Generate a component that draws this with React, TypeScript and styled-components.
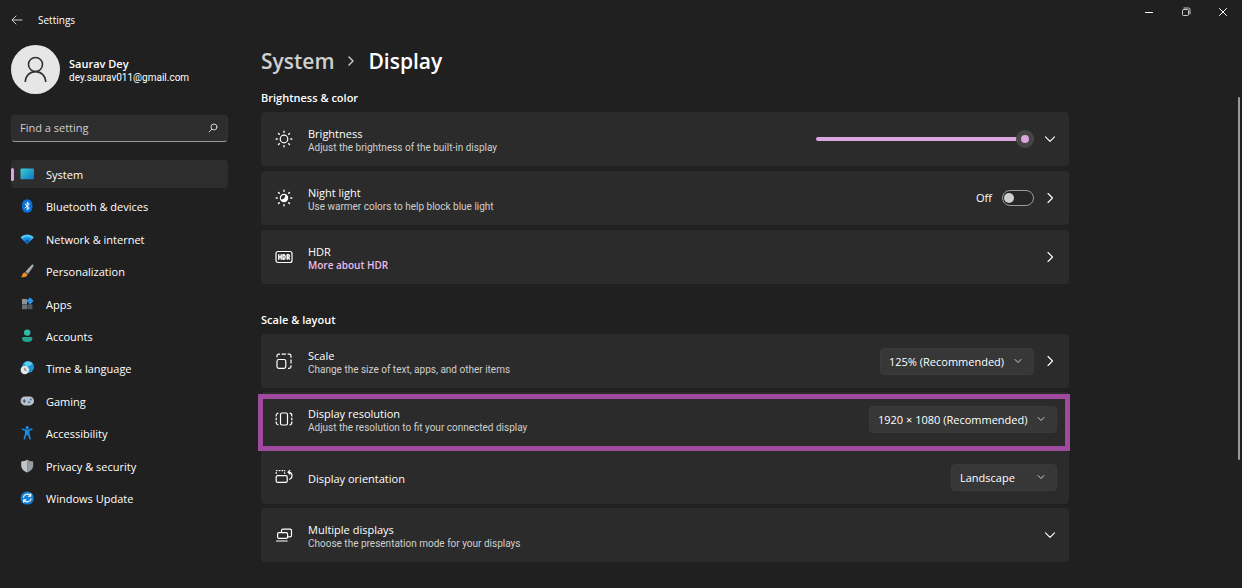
import React from "react";
import styled, { createGlobalStyle, css } from "styled-components";

const GlobalStyle = createGlobalStyle`
  * { box-sizing: border-box; }
  body {
    margin: 0;
    background: #202020;
    color: #fff;
    font-family: "Open Sans", "Noto Sans", sans-serif;
    font-size: 11px;
    line-height: 14px;
  }
  button, input, select { font: inherit; color: inherit; }
`;

const Window = styled.div`
  display: flex;
  flex-direction: column;
  min-height: 100vh;
`;

const TitleBar = styled.header`
  display: flex;
  align-items: center;
  height: 40px;
`;

const IconButton = styled.button`
  display: grid;
  place-items: center;
  flex: none;
  padding: 0;
  border: 0;
  background: none;
`;

const BackButton = styled(IconButton)`
  width: 34px;
  height: 28px;
`;

const AppName = styled.span`
  flex: 1;
  padding-left: 4px;
  font-size: 10px;
`;

const Caption = styled.div`
  display: flex;
  align-self: flex-start;
`;

const CaptionButton = styled(IconButton)`
  width: 37px;
  height: 24px;
`;

const Body = styled.div`
  display: flex;
  flex: 1;
`;

const Sidebar = styled.aside`
  flex: none;
  width: 228px;
  padding: 5px 0 0 11px;
`;

const Profile = styled.div`
  display: flex;
  align-items: center;
  gap: 9px;
`;

const ProfileText = styled.div`
  padding-top: 2px;
`;

const Avatar = styled.svg`
  flex: none;
  width: 49px;
  height: 49px;
`;

const UserName = styled.div`
  font-weight: 600;
`;

const UserMail = styled.div`
  font-family: Roboto, "Open Sans", sans-serif;
  font-size: 10px;
  line-height: 13px;
`;

const Search = styled.label`
  display: flex;
  align-items: center;
  height: 27px;
  margin-top: 21px;
  padding: 0 9px 1px 8px;
  border: 1px solid #303030;
  border-bottom-color: #9a9a9a;
  border-radius: 4px;
  background: #2d2d2d;
`;

const SearchInput = styled.input`
  flex: 1;
  min-width: 0;
  padding: 0;
  border: 0;
  outline: 0;
  background: none;
  &::placeholder { color: #cfcfcf; opacity: 1; }
`;

const Nav = styled.nav`
  display: flex;
  flex-direction: column;
  justify-content: space-between;
  min-height: 352px;
  margin-top: 18px;
`;

const NavLink = styled.a<{ $active?: boolean }>`
  position: relative;
  display: flex;
  align-items: center;
  gap: 11px;
  height: 28px;
  padding-left: 8px;
  border-radius: 4px;
  color: #fff;
  text-decoration: none;
  ${(p) =>
    p.$active &&
    css`
      background: #2d2d2d;
      &::before {
        content: "";
        position: absolute;
        left: 0;
        top: 8px;
        width: 3px;
        height: 13px;
        border-radius: 2px;
        background: #dba5e0;
      }
    `}
`;

const NavLabel = styled.span`
  padding-top: 2px;
`;

const Main = styled.main`
  flex: 1;
  min-width: 0;
  padding: 6px 20px 26px 33px;
`;

const Column = styled.div`
  max-width: 808px;
`;

const Breadcrumb = styled.h1`
  display: flex;
  align-items: center;
  gap: 13px;
  margin: 0;
  font-size: 21px;
  line-height: 30px;
  font-weight: 600;
`;

const Crumb = styled.a`
  color: #cfcfcf;
  text-decoration: none;
`;

const Section = styled.section<{ $top: number }>`
  margin-top: ${(p) => p.$top}px;
`;

const SectionTitle = styled.h2`
  margin: 0 0 6px;
  font-size: 11px;
  line-height: 16px;
  font-weight: 600;
`;

const Cards = styled.div<{ $gap: number }>`
  display: flex;
  flex-direction: column;
  gap: ${(p) => p.$gap}px;
`;

const Card = styled.div<{ $framed?: boolean }>`
  position: relative;
  display: flex;
  align-items: center;
  gap: 9px;
  min-height: 54px;
  padding: 0 12px 0 14px;
  border-radius: 4px;
  background: #2b2b2b;
  ${(p) =>
    p.$framed &&
    css`
      &::after {
        content: "";
        position: absolute;
        z-index: 1;
        inset: 2px -1px -5px -3px;
        border: 5px solid #a04a9f;
        pointer-events: none;
      }
    `}
`;

const CardText = styled.div`
  flex: 1;
  min-width: 0;
  padding: 3px 0 0 6px;
`;

const CardTitle = styled.div``;

const CardNote = styled.div`
  color: #cfcfcf;
  font-family: Roboto, "Open Sans", sans-serif;
  font-size: 10px;
  line-height: 13px;
`;

const CardLink = styled.a`
  display: block;
  color: #e9bdec;
  font-size: 10px;
  line-height: 13px;
  font-weight: 600;
  text-decoration: none;
`;

const ChevronButton = styled(IconButton)`
  width: 14px;
  height: 24px;
`;

const Slider = styled.input`
  appearance: none;
  width: 218px;
  height: 18px;
  margin: 0;
  background: none;
  &::-webkit-slider-runnable-track {
    height: 4px;
    border-radius: 2px;
    background: #dba5e0;
  }
  &::-webkit-slider-thumb {
    appearance: none;
    width: 18px;
    height: 18px;
    margin-top: -7px;
    border: 5px solid #454545;
    border-radius: 50%;
    background: #dba5e0;
  }
`;

const ToggleLabel = styled.label`
  display: flex;
  align-items: center;
  gap: 10px;
`;

const Toggle = styled.input`
  appearance: none;
  display: flex;
  align-items: center;
  width: 32px;
  height: 16px;
  margin: 0;
  padding: 0 1px;
  border: 1px solid #9c9c9c;
  border-radius: 8px;
  background: #262626;
  &::before {
    content: "";
    width: 10px;
    height: 10px;
    border-radius: 50%;
    background: #cfcfcf;
  }
  &:checked { justify-content: flex-end; }
`;

const SelectBox = styled.span`
  position: relative;
  display: flex;
`;

const Select = styled.select`
  appearance: none;
  min-width: 106px;
  height: 27px;
  padding: 1px 28px 0 8px;
  border: 1px solid #3a3a3a;
  border-radius: 4px;
  background: #373737;
`;

const SelectArrow = styled.svg`
  position: absolute;
  right: 12px;
  top: 9px;
  pointer-events: none;
`;

const Rail = styled.div`
  flex: none;
  width: 4px;
  padding-top: 57px;
`;

const Thumb = styled.div`
  width: 2px;
  height: 74%;
  border-radius: 1px;
  background: #9a9a9a;
`;

const stroke = { fill: "none", stroke: "#fff", strokeLinecap: "round", strokeLinejoin: "round" } as const;
const softStroke = { ...stroke, stroke: "#cfcfcf" } as const;

const Chevron = ({ dir }: { dir: "down" | "right" }) => (
  <svg width="12" height="12" viewBox="0 0 12 12" {...stroke} strokeWidth="1.1">
    <path d={dir === "down" ? "M1.5 3.8 6 8.3 10.5 3.8" : "M4 1.5 8.5 6 4 10.5"} />
  </svg>
);

const Dropdown = ({ label, options }: { label: string; options: string[] }) => (
  <SelectBox>
    <Select aria-label={label} defaultValue={options[0]}>
      {options.map((o) => (
        <option key={o}>{o}</option>
      ))}
    </Select>
    <SelectArrow width="8" height="8" viewBox="0 0 8 8" {...softStroke}>
      <path d="M1 2.5 4 5.5 7 2.5" />
    </SelectArrow>
  </SelectBox>
);

const Glyph = ({ cap = "round", children }: { cap?: "round" | "butt"; children: React.ReactNode }) => (
  <svg width="18" height="18" viewBox="0 0 18 18" {...stroke} strokeLinecap={cap} strokeWidth="1.2">
    {children}
  </svg>
);

const rays = "M9 1.2v1M9 15.8v1M1.2 9h1M15.8 9h1M3.5 3.5l.8.8M13.7 13.7l.8.8M3.5 14.5l.8-.8M13.7 4.3l.8-.8";

const glyphs = {
  sun: (
    <Glyph>
      <circle cx="9" cy="9" r="3.8" />
      <path d={rays} strokeWidth="1.4" />
    </Glyph>
  ),
  night: (
    <Glyph>
      <circle cx="9" cy="9" r="3.6" />
      <path d="M12 6.2A4 4 0 1 1 5.4 10.6C8.6 10.8 10.6 8.6 10.2 5.4Z" fill="#fff" stroke="none" />
      <path d={rays} strokeWidth="1.4" />
    </Glyph>
  ),
  hdr: (
    <Glyph>
      <rect x="1" y="3.5" width="16" height="11" rx="2" />
      <path d="M3.8 6.8v4.4M6.2 6.8v4.4M3.8 9h2.4M8 6.8v4.4h.6c2 0 2-4.4 0-4.4ZM12.2 11.2V6.8h1.1c1.5 0 1.5 2.4 0 2.4h-1.1M13.2 9.2l1.1 2" strokeWidth="1.4" />
    </Glyph>
  ),
  scale: (
    <Glyph cap="butt">
      <rect x="2" y="7.5" width="8.8" height="8.8" rx="1.8" />
      <path d="M2 5.2V4a1.8 1.8 0 0 1 1.8-1.8H5M6.6 2.2h4.4M12.6 2.2h1.6A1.8 1.8 0 0 1 16 4v1.8M16 7.6v4M16 13.2v1.3a1.8 1.8 0 0 1-1.8 1.8H13" />
    </Glyph>
  ),
  resolution: (
    <Glyph cap="butt">
      <rect x="5.5" y="3" width="7" height="12" rx="1.4" />
      <path d="M3.4 3.2A2.2 2.2 0 0 0 1.2 5.4v1M1.2 7.8v2.400M1.2 11.600v1A2.200 2.200 0 0 0 3.400 14.800M14.600 3.200A2.200 2.200 0 0 1 16.800 5.400v1M16.800 7.800v2.400M16.800 11.600v1A2.200 2.200 0 0 1 14.600 14.800" />
    </Glyph>
  ),
  orientation: (
    <Glyph>
      <rect x="1.2" y="7.6" width="11" height="6.8" rx="1.4" />
      <path d="M1.2 5.2V4.8M1.4 2.6h.6M4.2 2.6h.7M7 2.6h.7M9.7 2.6v.1M9.7 5v.2" strokeWidth="1.4" />
      <path d="M13 4.2C15.6 4.2 17 5.8 17 7.6S15.8 10.8 14.6 11.2M14.8 2.4 13 4.2l1.8 1.8" />
    </Glyph>
  ),
  multiple: (
    <Glyph>
      <path d="M6.5 6V4.6A1.4 1.4 0 0 1 7.9 3.2h7.2a1.4 1.4 0 0 1 1.4 1.4v4.8a1.4 1.4 0 0 1-1.4 1.4H13" />
      <rect x="2.6" y="6.6" width="10" height="5.8" rx="1.4" />
      <path d="M1.4 15h10.8" />
    </Glyph>
  ),
};

const NavIcon = ({ children }: { children: React.ReactNode }) => (
  <svg width="16" height="16" viewBox="0 0 16 16">
    {children}
  </svg>
);

const navItems: { label: string; icon: React.ReactNode }[] = [
  {
    label: "System",
    icon: (
      <NavIcon>
        <defs>
          <linearGradient id="sys" x1="0" y1="0" x2="1" y2="1">
            <stop offset="0" stopColor="#3bd0d8" />
            <stop offset="1" stopColor="#1272bd" />
          </linearGradient>
        </defs>
        <rect x="1.5" y="2.5" width="13.5" height="10.8" rx="1" fill="url(#sys)" />
      </NavIcon>
    ),
  },
  {
    label: "Bluetooth & devices",
    icon: (
      <NavIcon>
        <rect x="3" y="1.3" width="10.4" height="13.4" rx="5.2" fill="#0a6fd6" />
        <path d="M5.8 5.8 10.4 10 8.2 12V4l2.2 2-4.6 4.2" fill="none" stroke="#fff" strokeWidth="1" strokeLinejoin="round" />
      </NavIcon>
    ),
  },
  {
    label: "Network & internet",
    icon: (
      <NavIcon>
        <path d="M1.6 6.4C5 2.6 11.4 2.6 14.8 6.4L8.2 13Z" fill="#4cc6f5" />
        <path d="M3.3 8C6 5.3 10.4 5.3 13 8L8.2 13Z" fill="#168fe0" />
        <path d="M5.2 10c1.8-1.6 4.2-1.6 6 0l-3 3Z" fill="#0f5cb5" />
      </NavIcon>
    ),
  },
  {
    label: "Personalization",
    icon: (
      <NavIcon>
        <path d="M13.6 1.6c1 0 1.4.8.8 1.7L9.4 10.6 6.6 8.4l5.8-6.2c.3-.4.7-.6 1.2-.6Z" fill="#a9adb2" />
        <path d="M6.6 8.4 9.4 10.6l-.9 1.2-2.9-2.3Z" fill="#6c7075" />
        <path d="M5.5 9.4 8.5 11.7C8.2 13.8 5.2 14.8 2 13.9c1.4-.6 1.2-1.4 1.5-2.6.2-1 1-1.7 2-1.9Z" fill="#f08a24" />
      </NavIcon>
    ),
  },
  {
    label: "Apps",
    icon: (
      <NavIcon>
        <rect x="3" y="3" width="5" height="5" fill="#8c9299" />
        <rect x="3" y="8.4" width="5" height="4.8" fill="#6b7178" />
        <rect x="8.4" y="8.4" width="5" height="4.8" fill="#565b61" />
        <rect x="8.6" y="2.4" width="5" height="5" rx=".6" transform="rotate(45 11.1 4.9)" fill="#2b96e6" />
      </NavIcon>
    ),
  },
  {
    label: "Accounts",
    icon: (
      <NavIcon>
        <circle cx="8.2" cy="4.6" r="3.2" fill="#2dbfa5" />
        <path d="M4.6 9H11.8C12.8 9 13.4 9.6 13.4 10.5 13.4 12.9 11.1 14 8.2 14S3 12.9 3 10.5C3 9.6 3.6 9 4.6 9Z" fill="#22a58e" />
      </NavIcon>
    ),
  },
  {
    label: "Time & language",
    icon: (
      <NavIcon>
        <circle cx="9" cy="7" r="6" fill="#1d96d3" />
        <path d="M5 3.2C7.4.6 12 1.2 13.6 3.8 12 6 8 6.8 6.4 5.6Z" fill="#5fcdf0" />
        <circle cx="5.8" cy="10" r="4.2" fill="#e4e6e8" />
        <path d="M5.8 7.8V10.2H7.6" fill="none" stroke="#666b70" strokeWidth=".9" />
      </NavIcon>
    ),
  },
  {
    label: "Gaming",
    icon: (
      <NavIcon>
        <rect x="1.6" y="3.4" width="13.4" height="9" rx="4.4" fill="#b9c2cc" />
        <path d="M3.6 8H7M5.3 6.3V9.7" stroke="#4b525a" strokeWidth="1.2" />
        <circle cx="11.8" cy="6.6" r="1" fill="#2b6fb5" />
        <circle cx="10" cy="9.2" r="1" fill="#2b6fb5" />
      </NavIcon>
    ),
  },
  {
    label: "Accessibility",
    icon: (
      <NavIcon>
        <circle cx="8.2" cy="2.8" r="1.7" fill="#1b8be0" />
        <path d="M3.6 4.3 8.2 5.8 12.8 4.3M6.8 5.8V9L5.4 13.6M9.6 5.8V9L11 13.6M8.2 5.6V9.4" fill="none" stroke="#1b8be0" strokeWidth="1.7" strokeLinecap="round" strokeLinejoin="round" />
      </NavIcon>
    ),
  },
  {
    label: "Privacy & security",
    icon: (
      <NavIcon>
        <path d="M8.2 1.4C10 2.8 12 3.3 14.2 3.4V7.4C14.2 10.8 11.8 13 8.2 14.4Z" fill="#999da2" />
        <path d="M8.2 1.4C6.4 2.8 4.4 3.3 2.2 3.4V7.4C2.2 10.8 4.6 13 8.2 14.4Z" fill="#c3c6c9" />
      </NavIcon>
    ),
  },
  {
    label: "Windows Update",
    icon: (
      <NavIcon>
        <circle cx="8.2" cy="8" r="6.6" fill="#1180d4" />
        <path d="M4.4 7.2A4 4 0 0 1 11.4 5.7M11.7 3.8V6.2H9.4M12 8.8A4 4 0 0 1 5 10.3M4.7 12.2V9.8H7" fill="none" stroke="#fff" strokeWidth="1.1" strokeLinecap="round" strokeLinejoin="round" />
      </NavIcon>
    ),
  },
];

type SettingProps = {
  icon: React.ReactNode;
  title: string;
  note?: string;
  link?: string;
  framed?: boolean;
  chevron?: "down" | "right";
  children?: React.ReactNode;
};

const Setting = ({ icon, title, note, link, framed, chevron, children }: SettingProps) => (
  <Card $framed={framed}>
    {icon}
    <CardText>
      <CardTitle>{title}</CardTitle>
      {note && <CardNote>{note}</CardNote>}
      {link && <CardLink href="#hdr">{link}</CardLink>}
    </CardText>
    {children}
    {chevron && (
      <ChevronButton aria-label={`Open ${title}`}>
        <Chevron dir={chevron} />
      </ChevronButton>
    )}
  </Card>
);

export default function App() {
  return (
    <Window>
      <GlobalStyle />
      <TitleBar>
        <BackButton aria-label="Back">
          <svg width="12" height="12" viewBox="0 0 12 12" {...softStroke}>
            <path d="M11 6H1.2M5 2 1 6 5 10" />
          </svg>
        </BackButton>
        <AppName>Settings</AppName>
        <Caption>
          <CaptionButton aria-label="Minimize">
            <svg width="11" height="10" viewBox="0 0 11 10" {...stroke}>
              <path d="M1.5 5.5H8.5" />
            </svg>
          </CaptionButton>
          <CaptionButton aria-label="Restore">
            <svg width="11" height="10" viewBox="0 0 11 10" {...softStroke}>
              <rect x="1.5" y="2.5" width="6" height="6" rx="1" />
              <path d="M3 1H7.5A1.5 1.5 0 0 1 9 2.5V7" />
            </svg>
          </CaptionButton>
          <CaptionButton aria-label="Close">
            <svg width="11" height="10" viewBox="0 0 11 10" {...stroke}>
              <path d="M1.5 1.5 8.5 8.5M8.5 1.5 1.5 8.5" />
            </svg>
          </CaptionButton>
        </Caption>
      </TitleBar>
      <Body>
        <Sidebar>
          <Profile>
            <Avatar viewBox="0 0 49 49">
              <circle cx="24.5" cy="24.5" r="24.5" fill="#e6e6e6" />
              <g fill="none" stroke="#333" strokeWidth="1.6">
                <circle cx="24.5" cy="19.5" r="7" />
                <path d="M14.2 37C14.6 30.5 18.8 26.6 24.5 26.6S34.4 30.5 34.8 37" />
              </g>
            </Avatar>
            <ProfileText>
              <UserName>Saurav Dey</UserName>
              <UserMail>dey.saurav011@gmail.com</UserMail>
            </ProfileText>
          </Profile>
          <Search>
            <SearchInput type="search" placeholder="Find a setting" aria-label="Find a setting" />
            <svg width="10" height="10" viewBox="0 0 10 10" {...softStroke}>
              <circle cx="6" cy="4" r="3" />
              <path d="M3.8 6.2 1 9" />
            </svg>
          </Search>
          <Nav>
            {navItems.map(({ label, icon }, i) => (
              <NavLink key={label} href="#" $active={i === 0}>
                {icon}
                <NavLabel>{label}</NavLabel>
              </NavLink>
            ))}
          </Nav>
        </Sidebar>
        <Main>
          <Column>
            <Breadcrumb>
              <Crumb href="#">System</Crumb>
              <svg width="8" height="12" viewBox="0 0 8 12" {...softStroke} strokeWidth="1.4">
                <path d="M2 2 6 6 2 10" />
              </svg>
              <span>Display</span>
            </Breadcrumb>
            <Section $top={14}>
              <SectionTitle>Brightness &amp; color</SectionTitle>
              <Cards $gap={5}>
                <Setting icon={glyphs.sun} title="Brightness" note="Adjust the brightness of the built-in display" chevron="down">
                  <Slider type="range" min="0" max="100" defaultValue="100" aria-label="Brightness" />
                </Setting>
                <Setting icon={glyphs.night} title="Night light" note="Use warmer colors to help block blue light" chevron="right">
                  <ToggleLabel>
                    Off
                    <Toggle type="checkbox" />
                  </ToggleLabel>
                </Setting>
                <Setting icon={glyphs.hdr} title="HDR" link="More about HDR" chevron="right" />
              </Cards>
            </Section>
            <Section $top={28}>
              <SectionTitle>Scale &amp; layout</SectionTitle>
              <Cards $gap={4}>
                <Setting icon={glyphs.scale} title="Scale" note="Change the size of text, apps, and other items" chevron="right">
                  <Dropdown label="Scale" options={["125% (Recommended)", "100%", "150%"]} />
                </Setting>
                <Setting icon={glyphs.resolution} title="Display resolution" note="Adjust the resolution to fit your connected display" framed>
                  <Dropdown label="Display resolution" options={["1920 × 1080 (Recommended)", "1680 × 1050", "1280 × 720"]} />
                </Setting>
                <Setting icon={glyphs.orientation} title="Display orientation">
                  <Dropdown label="Display orientation" options={["Landscape", "Portrait"]} />
                </Setting>
                <Setting icon={glyphs.multiple} title="Multiple displays" note="Choose the presentation mode for your displays" chevron="down" />
              </Cards>
            </Section>
          </Column>
        </Main>
        <Rail>
          <Thumb />
        </Rail>
      </Body>
    </Window>
  );
}
